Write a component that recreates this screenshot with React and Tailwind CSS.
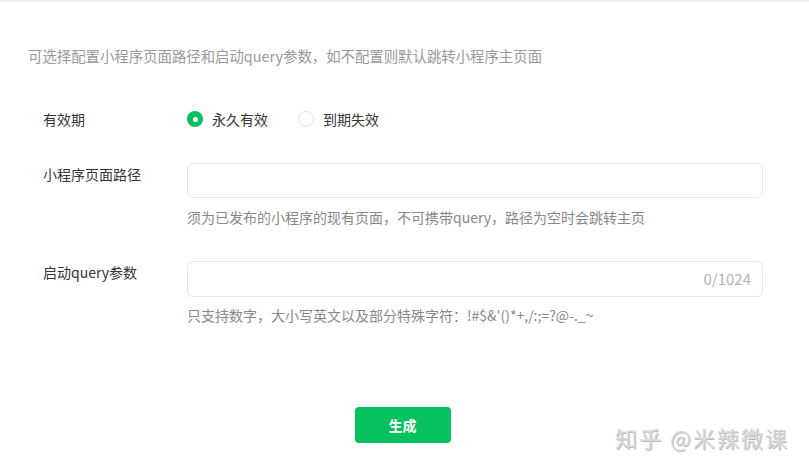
import React, { useState } from "react";

function Radio({ checked, label, onClick }) {
  return (
    <label className="flex items-center cursor-pointer" onClick={onClick}>
      {checked ? (
        <span className="w-4 h-4 rounded-full bg-[#07c160] flex items-center justify-center">
          <span className="w-[5px] h-[5px] rounded-full bg-white" />
        </span>
      ) : (
        <span className="w-4 h-4 rounded-full border border-[#e4e4e4] bg-white" />
      )}
      <span className="ml-[9px] text-sm text-[#353535]">{label}</span>
    </label>
  );
}

export default function App() {
  const [forever, setForever] = useState(true);
  const [path, setPath] = useState("");
  const [query, setQuery] = useState("");

  return (
    <div className="relative w-[809px] h-[469px] bg-white overflow-hidden font-['Noto_Sans_CJK_SC',sans-serif]">
      <div className="h-[2px] bg-[#f2f2f2]" />

      <p className="mt-[44px] ml-[28px] text-[14.4px] leading-5 text-[#999]">
        可选择配置小程序页面路径和启动query参数，如不配置则默认跳转小程序主页面
      </p>

      {/* 有效期 */}
      <div className="mt-[41px] flex items-center h-6">
        <div className="w-[187px] pl-[43px] text-sm text-[#353535]">有效期</div>
        <div className="flex items-center gap-[30px]">
          <Radio checked={forever} label="永久有效" onClick={() => setForever(true)} />
          <Radio checked={!forever} label="到期失效" onClick={() => setForever(false)} />
        </div>
      </div>

      {/* 小程序页面路径 */}
      <div className="mt-[32px] flex">
        <div className="w-[187px] pl-[43px] pt-[1px] text-sm leading-5 text-[#353535]">小程序页面路径</div>
        <div className="w-[576px]">
          <input
            value={path}
            onChange={(e) => setPath(e.target.value)}
            className="w-full h-[35px] border border-[#e6e6e6] rounded-md px-3 text-sm outline-none"
          />
          <p className="mt-[9px] text-sm leading-5 text-[#888]">
            须为已发布的小程序的现有页面，不可携带query，路径为空时会跳转主页
          </p>
        </div>
      </div>

      {/* 启动query参数 */}
      <div className="mt-[34px] flex">
        <div className="w-[187px] pl-[43px] pt-[1px] text-sm leading-5 text-[#353535]">启动query参数</div>
        <div className="w-[576px]">
          <div className="flex items-center h-[36px] border border-[#e6e6e6] rounded-md pl-3 pr-[11px]">
            <input
              value={query}
              onChange={(e) => setQuery(e.target.value)}
              className="flex-1 text-sm outline-none"
            />
            <span className="text-[15px] text-[#b2b2b2]">{query.length}/1024</span>
          </div>
          <p className="mt-[8px] text-sm leading-5 text-[#888]">
            只支持数字，大小写英文以及部分特殊字符：!#$&amp;'()*+,/:;=?@-._~
          </p>
        </div>
      </div>

      {/* BUTTON */}
      <div className="mt-[82px] flex justify-center">
        <button className="w-24 h-9 rounded bg-[#07c160] text-white text-sm font-bold ml-[-4px]">
          生成
        </button>
      </div>

      <div className="absolute left-[615px] top-[421px] text-[22px] leading-8 text-[#dadada] tracking-[2px] [text-shadow:1px_1px_0_#bdbdbd]">
        知乎 @米辣微课
      </div>
    </div>
  );
}
